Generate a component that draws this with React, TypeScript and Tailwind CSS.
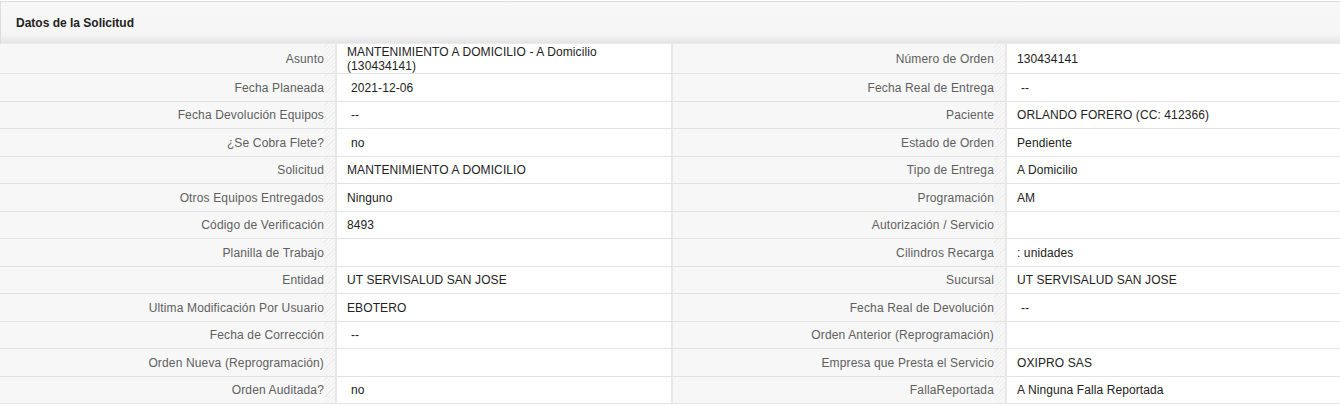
import React from 'react'

type Row = { l1: string; v1: React.ReactNode; l2: string; v2: React.ReactNode; tall?: boolean }

const rows: Row[] = [
  {
    l1: 'Asunto',
    v1: (
      <span>
        MANTENIMIENTO A DOMICILIO - A Domicilio
        <br />
        (130434141)
      </span>
    ),
    l2: 'Número de Orden',
    v2: '130434141',
    tall: true,
  },
  { l1: 'Fecha Planeada', v1: <span className="pl-1">2021-12-06</span>, l2: 'Fecha Real de Entrega', v2: <span className="pl-1">--</span> },
  { l1: 'Fecha Devolución Equipos', v1: <span className="pl-1">--</span>, l2: 'Paciente', v2: 'ORLANDO FORERO (CC: 412366)' },
  { l1: '¿Se Cobra Flete?', v1: <span className="pl-1">no</span>, l2: 'Estado de Orden', v2: 'Pendiente' },
  { l1: 'Solicitud', v1: 'MANTENIMIENTO A DOMICILIO', l2: 'Tipo de Entrega', v2: 'A Domicilio' },
  { l1: 'Otros Equipos Entregados', v1: 'Ninguno', l2: 'Programación', v2: 'AM' },
  { l1: 'Código de Verificación', v1: '8493', l2: 'Autorización / Servicio', v2: '' },
  { l1: 'Planilla de Trabajo', v1: '', l2: 'Cilindros Recarga', v2: ': unidades' },
  { l1: 'Entidad', v1: 'UT SERVISALUD SAN JOSE', l2: 'Sucursal', v2: 'UT SERVISALUD SAN JOSE' },
  { l1: 'Ultima Modificación Por Usuario', v1: 'EBOTERO', l2: 'Fecha Real de Devolución', v2: <span className="pl-1">--</span> },
  { l1: 'Fecha de Corrección', v1: <span className="pl-1">--</span>, l2: 'Orden Anterior (Reprogramación)', v2: '' },
  { l1: 'Orden Nueva (Reprogramación)', v1: '', l2: 'Empresa que Presta el Servicio', v2: 'OXIPRO SAS' },
  { l1: 'Orden Auditada?', v1: <span className="pl-1">no</span>, l2: 'FallaReportada', v2: 'A Ninguna Falla Reportada' },
]

function Label({ text, h }: { text: string; h: string }) {
  return (
    <div className={`flex ${h} border-b border-[#e3e3e3] border-r-2 border-r-[#e8e8e8] bg-[#f7f7f7]`}>
      <div className="flex flex-1 items-center justify-end text-[12px] tracking-[0.15px] text-[#606060]">{text}</div>
      <div className="w-[11px] bg-[repeating-linear-gradient(135deg,#f7f7f7_0px,#f7f7f7_2px,#eeeeee_2px,#eeeeee_3px)]" />
    </div>
  )
}

function Value({ children, h, last }: { children: React.ReactNode; h: string; last?: boolean }) {
  return (
    <div
      className={`flex ${h} items-center border-b border-[#e3e3e3] bg-white pl-[10px] text-[12px] leading-[14px] tracking-[0.1px] text-[#222] ${
        last ? '' : 'border-r-2 border-r-[#e8e8e8]'
      }`}
    >
      {children}
    </div>
  )
}

export default function App() {
  return (
    <div className="w-[1340px] bg-white pt-px font-['Liberation_Sans',Arial,sans-serif]">
      <div className="flex h-[43px] items-center border-t border-l border-[#dedede] bg-[linear-gradient(to_bottom,#f7f7f7_0%,#f5f5f5_78%,#e4e4e4_97%,#f0f0f0_100%)] pl-[15px]">
        <span className="text-[12px] font-bold text-[#222]">Datos de la Solicitud</span>
      </div>
      <div className="grid grid-cols-[337px_336px_334px_1fr]">
        {rows.map((r, i) => {
          const h = r.tall ? 'h-[30px]' : i % 2 === 1 ? 'h-[28px]' : 'h-[27px]'
          return (
            <React.Fragment key={i}>
              <Label text={r.l1} h={h} />
              <Value h={h}>{r.v1}</Value>
              <Label text={r.l2} h={h} />
              <Value h={h} last>
                {r.v2}
              </Value>
            </React.Fragment>
          )
        })}
      </div>
    </div>
  )
}
